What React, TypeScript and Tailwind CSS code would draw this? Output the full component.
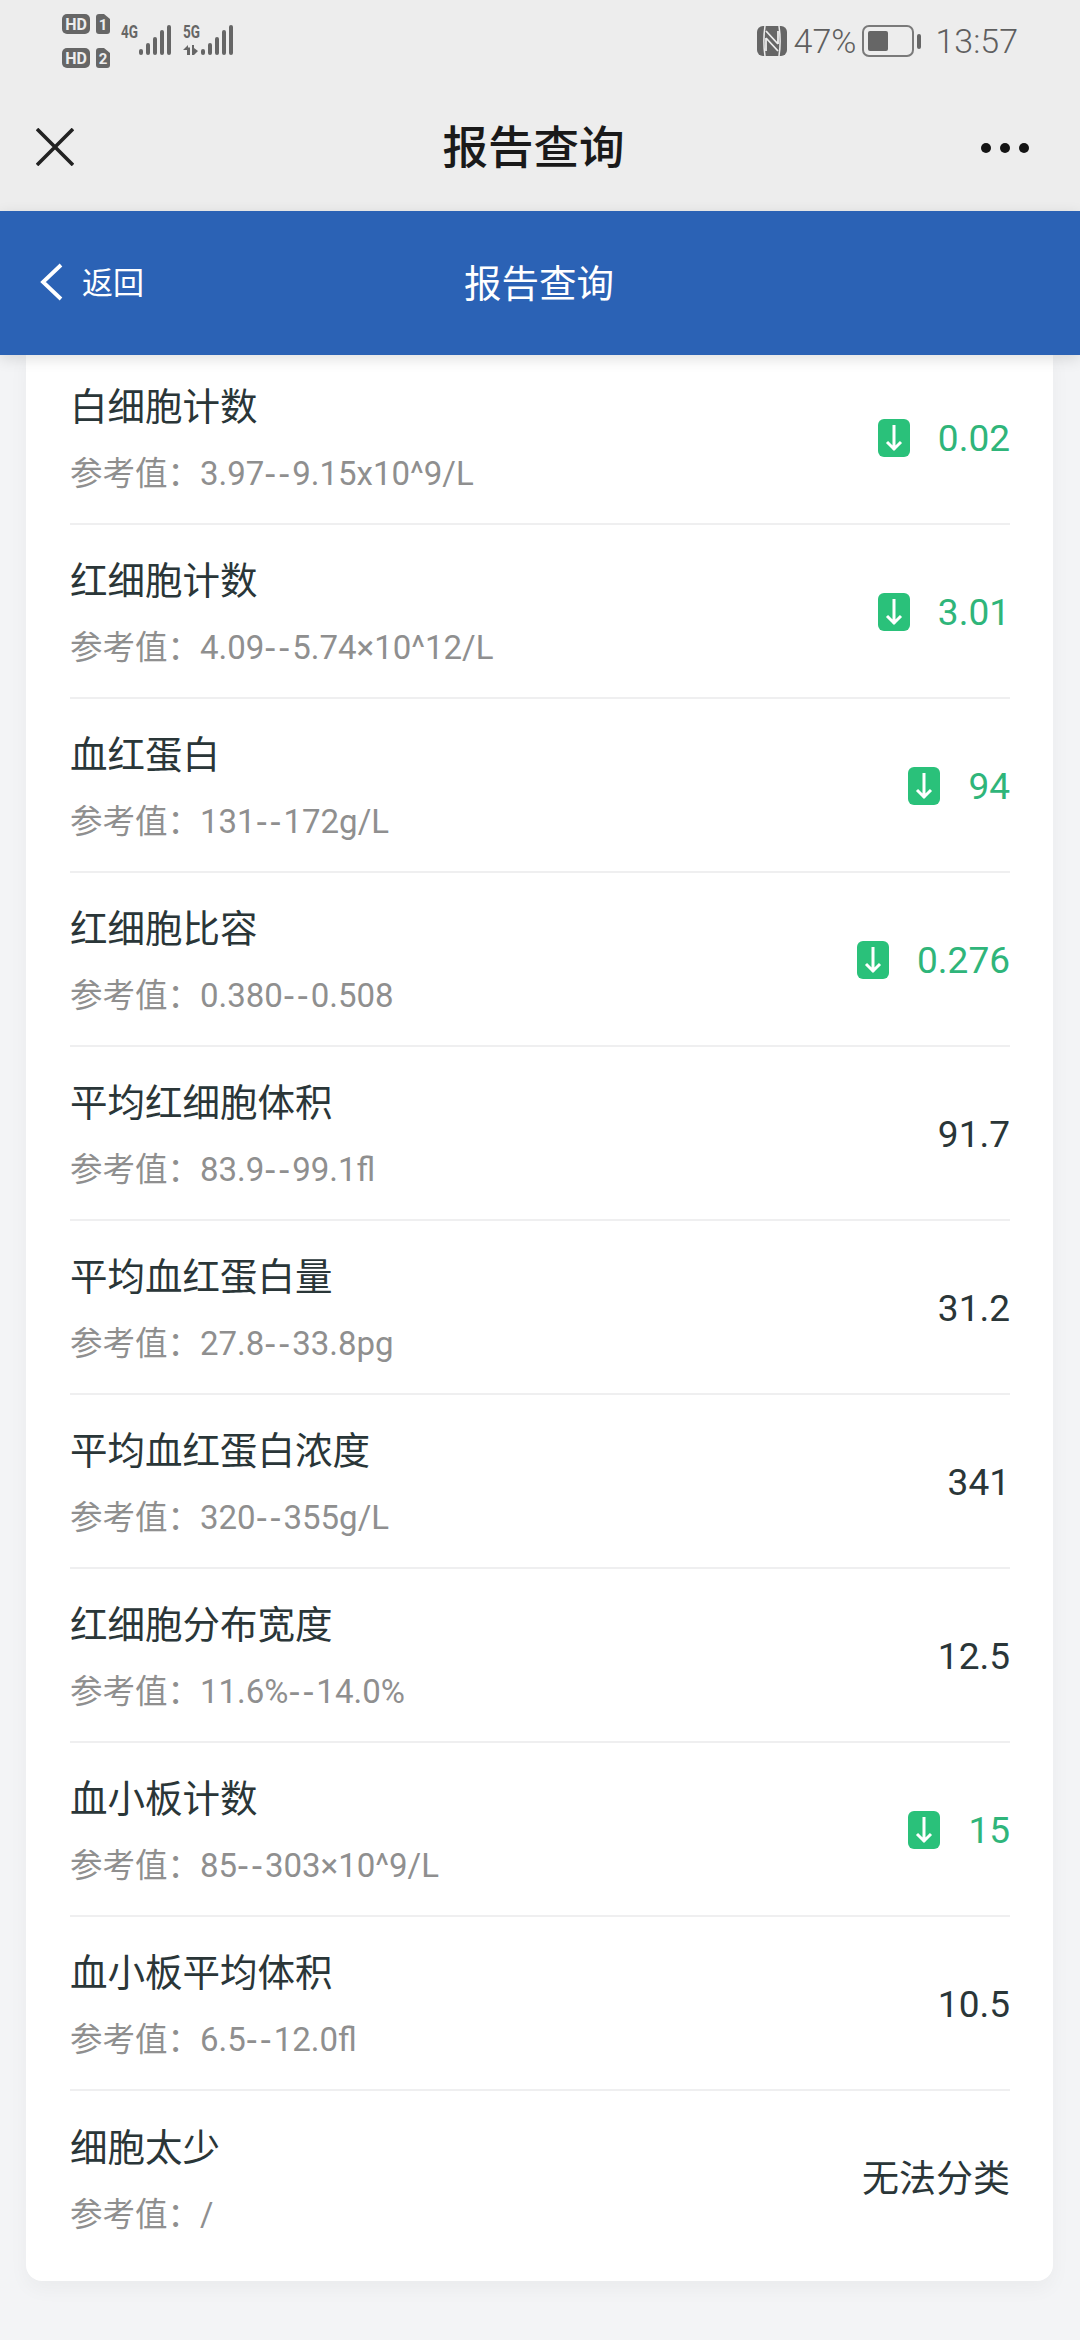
const font = { cjk: "font-['Roboto','Noto_Sans_CJK_SC',sans-serif]" };

type Row = { name: string; ref: string; value: string; low?: boolean };

const rows: Row[] = [
  { name: "白细胞计数", ref: "3.97--9.15x10^9/L", value: "0.02", low: true },
  { name: "红细胞计数", ref: "4.09--5.74×10^12/L", value: "3.01", low: true },
  { name: "血红蛋白", ref: "131--172g/L", value: "94", low: true },
  { name: "红细胞比容", ref: "0.380--0.508", value: "0.276", low: true },
  { name: "平均红细胞体积", ref: "83.9--99.1fl", value: "91.7" },
  { name: "平均血红蛋白量", ref: "27.8--33.8pg", value: "31.2" },
  { name: "平均血红蛋白浓度", ref: "320--355g/L", value: "341" },
  { name: "红细胞分布宽度", ref: "11.6%--14.0%", value: "12.5" },
  { name: "血小板计数", ref: "85--303×10^9/L", value: "15", low: true },
  { name: "血小板平均体积", ref: "6.5--12.0fl", value: "10.5" },
  { name: "细胞太少", ref: "/", value: "无法分类" },
];

function SimIcons() {
  return (
    <svg width="48" height="54" viewBox="0 0 48 54" className="overflow-visible text-[#666666]">
      <rect x="0" y="0" width="28" height="20" rx="5" fill="currentColor" />
      <text x="14" y="15.5" textAnchor="middle" fontSize="16" fontWeight="700" fontFamily="Roboto" fill="#ededed">HD</text>
      <path d="M37 0h5l6 5v12a3 3 0 0 1-3 3h-8a3 3 0 0 1-3-3V3a3 3 0 0 1 3-3z" fill="currentColor" />
      <text x="41" y="16" textAnchor="middle" fontSize="15" fontWeight="700" fontFamily="Roboto" fill="#ededed">1</text>
      <rect x="0" y="34" width="28" height="20" rx="5" fill="currentColor" />
      <text x="14" y="49.5" textAnchor="middle" fontSize="16" fontWeight="700" fontFamily="Roboto" fill="#ededed">HD</text>
      <path d="M37 34h5l6 5v12a3 3 0 0 1-3 3h-8a3 3 0 0 1-3-3V37a3 3 0 0 1 3-3z" fill="currentColor" />
      <text x="41" y="50" textAnchor="middle" fontSize="15" fontWeight="700" fontFamily="Roboto" fill="#ededed">2</text>
    </svg>
  );
}

function SignalIcon({ label, traffic }: { label: string; traffic?: boolean }) {
  return (
    <svg width="51" height="30" viewBox="0 0 51 30" className="overflow-visible text-[#666666]">
      <text x="0" y="13" fontSize="18" fontWeight="700" fontFamily="Roboto" fill="currentColor" textLength="17" lengthAdjust="spacingAndGlyphs">{label}</text>
      {traffic && (
        <path d="M0 25l5-5v2.500h2V30H4v-5zM9 20h2v3l4 3-4 4H9z" fill="currentColor" />
      )}
      <rect x="18" y="24" width="4" height="6" rx="2" fill="currentColor" />
      <rect x="25" y="18" width="4" height="12" rx="2" fill="currentColor" />
      <rect x="32" y="12" width="4" height="18" rx="2" fill="currentColor" />
      <rect x="39" y="5" width="4" height="25" rx="2" fill="currentColor" />
      <rect x="46" y="0" width="4" height="30" rx="2" fill="currentColor" />
    </svg>
  );
}

function NfcIcon() {
  return (
    <svg width="30" height="30" viewBox="0 0 30 30">
      <rect width="30" height="30" rx="6" fill="#666666" />
      <path d="M8 0c-1.500 10-1.500 20 0 30M22 0c1.500 10 1.500 20 0 30" stroke="#ededed" strokeWidth="1.5" fill="none" />
      <path d="M9 5l12 13M9 12l12 13M9 12v13M21 5v13" stroke="#ededed" strokeWidth="1.800" fill="none" />
    </svg>
  );
}

function BatteryIcon() {
  return (
    <svg width="60" height="32" viewBox="0 0 60 32">
      <rect x="1" y="1" width="50" height="30" rx="6" fill="none" stroke="#7a7a7a" strokeWidth="2" />
      <rect x="6" y="6" width="20" height="20" rx="2" fill="#666666" />
      <rect x="55" y="9" width="4" height="15" rx="2" fill="#666666" />
    </svg>
  );
}

function DownBadge() {
  return (
    <span className="mt-[-2px] flex h-[38px] w-[32px] items-center justify-center rounded-[6px] bg-[#2ac17a]">
      <svg width="20" height="28" viewBox="0 0 20 28" fill="none" stroke="#ffffff" strokeWidth="3">
        <path d="M10 1v25M3 18l7 7 7-7" />
      </svg>
    </span>
  );
}

// the double hyphen sits wider in the reference than Roboto sets it
function RefRange({ text }: { text: string }) {
  const parts = text.split("--");
  if (parts.length < 2) return <span>{text}</span>;
  return (
    <span className="text-[33px]">
      {parts[0]}
      <span className="font-['DejaVu_Sans'] tracking-[2px]">--</span>
      {parts[1]}
    </span>
  );
}

function ReportRow({ row, last }: { row: Row; last: boolean }) {
  return (
    <div className={`flex h-[174px] items-center justify-between pt-[3px] ${last ? "" : "border-b-2 border-[#efeff0]"}`}>
      <div className="flex flex-col">
        <div className="text-[37.5px] leading-[52px] text-[#2a3638]">{row.name}</div>
        <div className="mt-[19px] text-[32.5px] leading-[44px] text-[#8f8f8f]">
          参考值：<RefRange text={row.ref} />
        </div>
      </div>
      <div className={`flex items-center gap-[28px] text-[37px] leading-[52px] ${row.low ? "text-[#2fb57a]" : "text-[#2a3638]"}`}>
        {row.low && <DownBadge />}
        <span>{row.value}</span>
      </div>
    </div>
  );
}

export default function App() {
  return (
    <div className={`flex h-[2340px] w-[1080px] flex-col overflow-hidden bg-[#f3f4f6] ${font.cjk}`}>
      <div className="flex h-[90px] items-start justify-between bg-[#ededed] pl-[62px] pr-[62px] pt-[14px]">
        <div className="flex items-start gap-[11px]">
          <SimIcons />
          <div className="mt-[11px] flex gap-[11px]">
            <SignalIcon label="4G" />
            <SignalIcon label="5G" traffic />
          </div>
        </div>
        <div className="mt-[11px] flex items-center text-[34px] font-light leading-[32px] text-[#5f5f5f]">
          <NfcIcon />
          <span className="ml-[7px]">47%</span>
          <span className="ml-[6px]">
            <BatteryIcon />
          </span>
          <span className="ml-[13px]">13:57</span>
        </div>
      </div>

      <div className="flex h-[121px] items-center bg-[#ededed] pb-[4px] pl-[36px] pr-[51px]">
        <div className="w-[114px] pb-[3px]">
          <svg width="38" height="38" viewBox="0 0 38 38" stroke="#222222" strokeWidth="3.6" fill="none">
            <path d="M1 1l36 36M37 1L1 37" />
          </svg>
        </div>
        <div className="flex-1 text-center text-[45.5px] font-medium leading-[60px] text-[#1a1a1a]">报告查询</div>
        <div className="flex w-[112px] justify-end gap-[9px] pb-[2px]">
          <span className="h-[10px] w-[10px] rounded-full bg-[#141414]" />
          <span className="h-[10px] w-[10px] rounded-full bg-[#141414]" />
          <span className="h-[10px] w-[10px] rounded-full bg-[#141414]" />
        </div>
      </div>

      <div className="relative z-10 flex h-[144px] items-center bg-[#2b62b5] pl-[40px] pt-[2px] shadow-[0_4px_14px_rgba(0,0,0,0.12)]">
        <div className="flex w-[160px] items-center gap-[19px]">
          <svg width="23" height="38" viewBox="0 0 23 38" stroke="#ffffff" strokeWidth="3.8" fill="none" className="mb-[5px]">
            <path d="M21 2L3 19l18 17" />
          </svg>
          <span className="text-[31px] leading-[44px] text-white">返回</span>
        </div>
        <div className="flex-1 text-center text-[37.5px] leading-[52px] text-white">报告查询</div>
        <div className="w-[202px]" />
      </div>

      <div className="ml-[26px] mt-[-4px] w-[1027px] rounded-b-[16px] bg-white pb-[16px] pl-[44px] pr-[43px] shadow-[0_8px_20px_rgba(0,0,0,0.04)]">
        {rows.map((row, i) => (
          <ReportRow key={row.name} row={row} last={i === rows.length - 1} />
        ))}
      </div>
    </div>
  );
}
